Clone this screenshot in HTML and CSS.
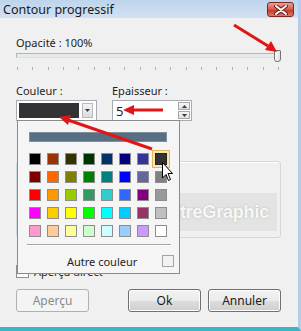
FILE: index.html
```html
<!DOCTYPE html>
<html>
<head>
    <title>Contour progressif</title>
    <link rel="stylesheet" href="styles.css">
</head>
<body>
    <div class="window">
        <div class="titlebar">
            <span class="title">Contour progressif</span>
            <div class="close">
                <svg width="14" height="10" viewBox="0 0 14 10">
                    <path d="M2 1 L12 9 M12 1 L2 9" stroke="#6b1d1d" stroke-width="4" stroke-linecap="round"/>
                    <path d="M2 1 L12 9 M12 1 L2 9" stroke="#ffffff" stroke-width="2" stroke-linecap="round"/>
                </svg>
            </div>
        </div>

        <div class="content">
            <div class="label">Opacité : 100%</div>
            <div class="slider">
                <div class="track"></div>
                <div class="thumb"></div>
            </div>
            <div class="ticks">
                <span></span><span></span><span></span><span></span><span></span><span></span>
                <span></span><span></span><span></span><span></span><span></span><span></span>
                <span></span><span></span><span></span><span></span><span></span><span></span>
            </div>

            <div class="fields">
                <div class="field">
                    <div class="label">Couleur :</div>
                    <div class="combo">
                        <div class="combo-swatch"></div>
                        <div class="combo-btn">
                            <svg width="5" height="3" viewBox="0 0 5 3"><path d="M0 0 H5 L2.5 3 Z" fill="#3a3a3a"/></svg>
                        </div>
                    </div>
                </div>
                <div class="field">
                    <div class="label">Epaisseur :</div>
                    <div class="spin">
                        <span class="spin-value">5</span>
                        <div class="spin-btns">
                            <div class="spin-btn"><svg width="5" height="3" viewBox="0 0 5 3"><path d="M0 3 H5 L2.5 0 Z" fill="#3a3a3a"/></svg></div>
                            <div class="spin-btn"><svg width="5" height="3" viewBox="0 0 5 3"><path d="M0 0 H5 L2.5 3 Z" fill="#3a3a3a"/></svg></div>
                        </div>
                    </div>
                </div>
            </div>

            <div class="preview-box"></div>

            <div class="check">
                <span class="check-box"></span>
                <span>Aperçu direct</span>
            </div>

            <div class="buttons">
                <button class="btn" disabled>Aperçu</button>
                <span class="spacer"></span>
                <button class="btn">Ok</button>
                <button class="btn">Annuler</button>
            </div>
        </div>

        <div class="watermark"><span>LeMaîtreGraphic</span></div>

        <!-- color picker dropdown -->
        <div class="popup">
            <div class="popup-bar"></div>
            <div class="palette">
                <span style="background:#000000"></span><span style="background:#993300"></span><span style="background:#333300"></span><span style="background:#003300"></span>
                <span style="background:#003366"></span><span style="background:#000080"></span><span style="background:#333399"></span><span class="selected" style="background:#333333"></span>
                <span style="background:#800000"></span><span style="background:#ff6600"></span><span style="background:#808000"></span><span style="background:#008000"></span>
                <span style="background:#008080"></span><span style="background:#0000ff"></span><span style="background:#666699"></span><span style="background:#808080"></span>
                <span style="background:#ff0000"></span><span style="background:#ff9900"></span><span style="background:#99cc00"></span><span style="background:#339966"></span>
                <span style="background:#33cccc"></span><span style="background:#3366ff"></span><span style="background:#800080"></span><span style="background:#999999"></span>
                <span style="background:#ff00ff"></span><span style="background:#ffcc00"></span><span style="background:#ffff00"></span><span style="background:#00ff00"></span>
                <span style="background:#00ffff"></span><span style="background:#00ccff"></span><span style="background:#993366"></span><span style="background:#c0c0c0"></span>
                <span style="background:#ff99cc"></span><span style="background:#ffcc99"></span><span style="background:#ffff99"></span><span style="background:#ccffcc"></span>
                <span style="background:#ccffff"></span><span style="background:#99ccff"></span><span style="background:#cc99ff"></span><span style="background:#ffffff"></span>
            </div>
            <div class="popup-sep"></div>
            <div class="other">
                <span class="other-text">Autre couleur</span>
                <span class="other-box"></span>
            </div>
        </div>

        <svg class="arrows" width="301" height="331" viewBox="0 0 301 331">
            <g stroke="#e21414" stroke-width="3" fill="#e21414">
                <line x1="234" y1="25" x2="268" y2="46"/>
                <line x1="163" y1="110" x2="133" y2="110"/>
                <line x1="152" y1="149" x2="68" y2="120"/>
            </g>
            <g fill="#e21414">
                <path d="M277 52 L265 50 L271 41 Z"/>
                <path d="M123 110 L134 105 L134 115 Z"/>
                <path d="M59 117 L71 115 L68 125 Z"/>
            </g>
        </svg>

        <svg class="cursor" width="12" height="20" viewBox="0 0 12 20">
            <path d="M0.5 0.5 V16 L4 12.5 L6.5 18.5 L8.5 17.5 L6 11.5 H10.5 Z" fill="#ffffff" stroke="#000000" stroke-width="1"/>
        </svg>
    </div>
</body>
</html>
```

FILE: styles.css
```css
* {
    box-sizing: border-box;
}
body {
    margin: 0;
    font-family: "Noto Sans", "DejaVu Sans", sans-serif;
    font-size: 11px;
    color: #1e1e1e;
}
.window {
    position: relative;
    width: 301px;
    height: 331px;
    background-color: #f0f0f0;
    border-right: 3px solid #b4cee9;
    border-bottom: 4px solid #3fb4c6;
    overflow: hidden;
}
.titlebar {
    height: 18px;
    display: flex;
    align-items: center;
    justify-content: space-between;
    padding: 0 4px 0 3px;
    background: linear-gradient(#bed4ec, #d2e2f3);
}
.title {
    font-size: 12.5px;
    color: #1a1a1a;
}
.close {
    width: 27px;
    height: 15px;
    margin-top: 1px;
    display: flex;
    align-items: center;
    justify-content: center;
    border: 1px solid #7a2a22;
    border-radius: 3px;
    background: linear-gradient(#eba090, #d25a48 50%, #c43a28 55%, #da7a62);
}
.content {
    padding: 18px 17px 0 16px;
}
.label {
    height: 14px;
    line-height: 14px;
}
.slider {
    position: relative;
    height: 12px;
}
.track {
    position: absolute;
    left: 0;
    right: 0;
    top: 3px;
    height: 5px;
    background-color: #e7eaea;
    border: 1px solid #b5b5b5;
    border-bottom-color: #e0e0e0;
    border-right-color: #d5d5d5;
}
.thumb {
    position: absolute;
    right: 0;
    top: 0;
    width: 7px;
    height: 12px;
    background: linear-gradient(90deg, #fbfbfb, #e3e3e3);
    border: 1px solid #737373;
    border-radius: 1px 1px 3px 3px;
}
.ticks {
    display: flex;
    justify-content: space-between;
    padding: 0 2px 0 1px;
    margin-top: 5px;
    height: 3px;
}
.ticks span {
    width: 1px;
    height: 3px;
    background-color: #b0b0b0;
}
.fields {
    display: flex;
    gap: 15px;
    margin-top: 14px;
}
.field .label {
    margin-bottom: 2px;
}
.combo {
    width: 81px;
    height: 21px;
    display: flex;
    align-items: center;
    padding: 2px;
    gap: 3px;
    background-color: #ffffff;
    border: 1px solid #a5acb5;
}
.combo-swatch {
    width: 60px;
    height: 15px;
    background-color: #333333;
}
.combo-btn {
    width: 11px;
    height: 15px;
    display: flex;
    align-items: center;
    justify-content: center;
    background: linear-gradient(#f4f4f4, #dcdcdc);
    border: 1px solid #b9b9b9;
}
.spin {
    width: 80px;
    height: 21px;
    display: flex;
    align-items: center;
    justify-content: space-between;
    padding: 0 1px 0 3px;
    background-color: #ffffff;
    border: 1px solid #a5acb5;
}
.spin-value {
    font-size: 13px;
}
.spin-btns {
    display: flex;
    flex-direction: column;
    gap: 1px;
}
.spin-btn {
    width: 12px;
    height: 8px;
    display: flex;
    align-items: center;
    justify-content: center;
    background: linear-gradient(#f6f6f6, #dedede);
    border: 1px solid #a8a8a8;
}
.preview-box {
    height: 77px;
    margin-top: 40px;
    border: 1px solid #d3d8dc;
    border-radius: 3px;
    box-shadow: inset 1px 1px 0 #ffffff;
}
.check {
    display: flex;
    align-items: center;
    gap: 5px;
    margin-top: 27px;
    height: 13px;
}
.check-box {
    width: 13px;
    height: 13px;
    background: linear-gradient(#e6e6e6, #ffffff);
    border: 1px solid #8e8f8f;
}
.buttons {
    display: flex;
    gap: 7px;
    margin-top: 11px;
}
.spacer {
    flex: 1;
}
.btn {
    width: 73px;
    height: 23px;
    padding: 0;
    font-family: "Noto Sans", "DejaVu Sans", sans-serif;
    font-size: 12px;
    color: #1a1a1a;
    border: 1px solid #707070;
    border-radius: 3px;
    background: linear-gradient(#f2f2f2, #ebebeb 50%, #dddddd 51%, #cfcfcf);
    box-shadow: inset 0 0 0 1px #fcfcfc;
}
.btn:disabled {
    color: #8a8a8a;
    border-color: #adb2b5;
    background: #f4f4f4;
    box-shadow: none;
}

/* dropdown palette */
.popup {
    position: absolute;
    left: 17px;
    top: 120px;
    width: 163px;
    height: 154px;
    padding: 11px 0 0 11px;
    background-color: #f5f5f5;
    border: 1px solid #8c8c8c;
}
.popup-bar {
    width: 138px;
    height: 10px;
    background-color: #566f82;
    border: 1px solid #7f8f9c;
}
.palette {
    display: grid;
    grid-template-columns: repeat(8, 12px);
    grid-auto-rows: 12px;
    gap: 6px;
    margin-top: 11px;
}
.palette span {
    border: 1px solid #8d8d8d;
}
.palette .selected {
    border-color: #222222;
    box-shadow: 0 0 0 2px #fbe6b2, 0 0 0 3px #e4b65c;
}
.popup-sep {
    width: 144px;
    height: 2px;
    margin: 7px 0 0 -2px;
    border-top: 1px solid #a7a7a7;
    border-bottom: 1px solid #ffffff;
}
.other {
    display: flex;
    align-items: center;
    margin-top: 9px;
    height: 12px;
}
.other-text {
    margin-left: 38px;
}
.other-box {
    width: 12px;
    height: 12px;
    margin-left: 25px;
    border: 1px solid #a4a4a4;
    background-color: #f2f2f2;
}
.watermark {
    position: absolute;
    left: 88px;
    top: 193px;
    width: 189px;
    height: 38px;
    display: flex;
    align-items: center;
    justify-content: flex-end;
    padding-right: 8px;
    background-color: rgba(120, 120, 120, 0.1);
    color: rgba(255, 255, 255, 0.9);
    font-family: "Liberation Sans", sans-serif;
    font-size: 18px;
    font-weight: bold;
    letter-spacing: -0.2px;
    text-shadow: 0 0 2px rgba(0, 0, 0, 0.22);
}
.arrows {
    position: absolute;
    left: 0;
    top: 0;
}
.cursor {
    position: absolute;
    left: 162px;
    top: 162px;
}
```
